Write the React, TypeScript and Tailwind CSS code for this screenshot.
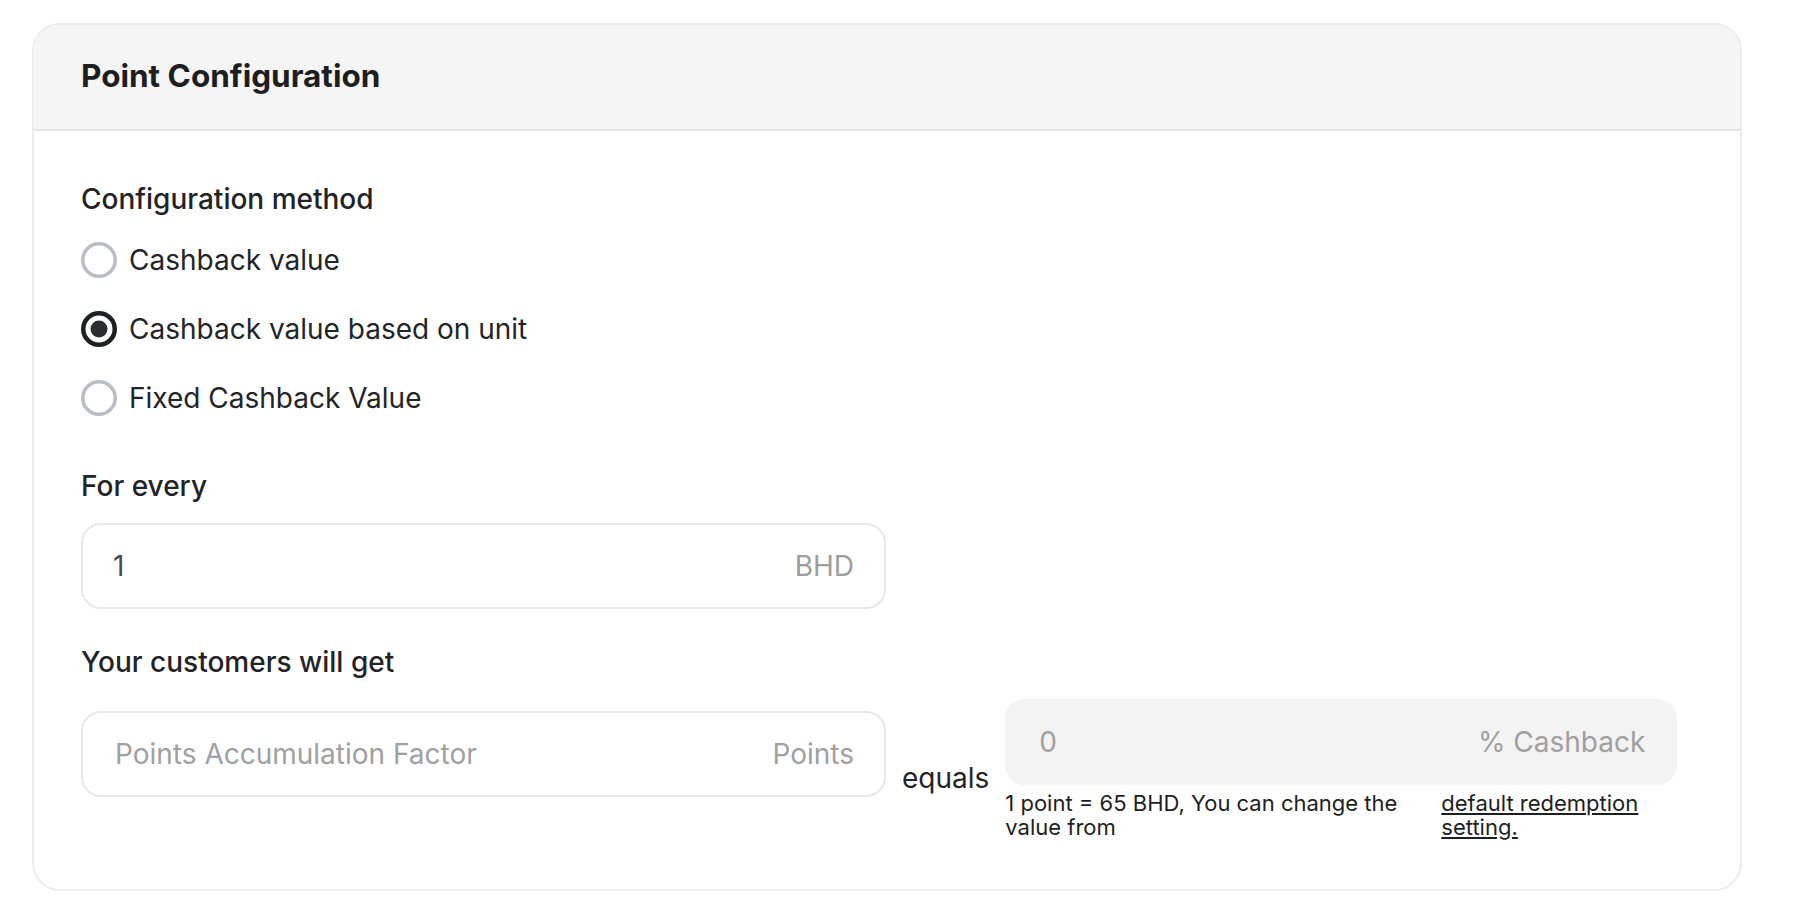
import { useState } from 'react';

type Method = 'cashback' | 'unit' | 'fixed';

const methods: { id: Method; label: string }[] = [
  { id: 'cashback', label: 'Cashback value' },
  { id: 'unit', label: 'Cashback value based on unit' },
  { id: 'fixed', label: 'Fixed Cashback Value' },
];

function Radio({ checked }: { checked: boolean }) {
  return checked ? (
    <svg width="36" height="36" viewBox="0 0 36 36" className="shrink-0">
      <circle cx="18" cy="18" r="15.75" fill="white" stroke="#1f2023" strokeWidth="4.5" />
      <circle cx="18" cy="18" r="8.5" fill="#2b2c2f" />
    </svg>
  ) : (
    <svg width="36" height="36" viewBox="0 0 36 36" className="shrink-0">
      <circle cx="18" cy="18" r="16.25" fill="white" stroke="#b9bec5" strokeWidth="3.5" />
    </svg>
  );
}

export default function App() {
  const [method, setMethod] = useState<Method>('unit');

  return (
    <div className="min-h-screen bg-white pt-[23px] pl-[32px] font-['Inter',sans-serif] text-[#222326]">
      <div className="w-[1710px] h-[868px] rounded-[28px] border-2 border-[#ececec] overflow-hidden">
        {/* header */}
        <div className="h-[106px] bg-[#f5f5f5] border-b-2 border-[#e3e3e3] flex items-center pl-[47px]">
          <h1 className="text-[31.5px] leading-[38px] font-bold text-[#1d1e21] pb-[2px]">
            Point Configuration
          </h1>
        </div>

        <div className="pl-[47px] pt-[52px]">
          <p className="text-[28px] leading-[32px] font-medium">Configuration method</p>

          <div className="mt-[27px] flex flex-col gap-[33px]">
            {methods.map((m) => (
              <label
                key={m.id}
                className="flex items-center gap-[12px] h-[36px] cursor-pointer"
                onClick={() => setMethod(m.id)}
              >
                <Radio checked={method === m.id} />
                <span className="text-[28px] leading-[32px] text-[#232428]">{m.label}</span>
              </label>
            ))}
          </div>

          <p className="mt-[54px] text-[28px] leading-[32px] font-medium">For every</p>
          <div className="mt-[21px] w-[805px] h-[86px] rounded-[20px] border-2 border-[#e7e7e7] flex items-center justify-between px-[30px]">
            <span className="text-[28px] text-[#474a50]">1</span>
            <span className="text-[28px] text-[#9d9d9d]">BHD</span>
          </div>

          <p className="mt-[37px] text-[28px] leading-[32px] font-medium">Your customers will get</p>

          <div className="mt-[21px] flex items-start gap-[16px]">
            <div className="mt-[12px] w-[805px] h-[86px] rounded-[20px] border-2 border-[#e7e7e7] flex items-center justify-between pl-[32px] pr-[30px]">
              <span className="text-[28px] text-[#a0a0a0]">Points Accumulation Factor</span>
              <span className="text-[28px] text-[#a0a0a0]">Points</span>
            </div>
            <span className="mt-[63px] text-[28px] leading-[32px] text-[#222326]">equals</span>
            <div className="w-[672px]">
              <div className="h-[86px] rounded-[20px] bg-[#f3f3f3] flex items-center justify-between pl-[34px] pr-[32px]">
                <span className="text-[28px] text-[#a0a0a0]">0</span>
                <span className="text-[28px] text-[#a0a0a0]">% Cashback</span>
              </div>
              <div className="mt-[6px] flex gap-[16px] text-[22px] leading-[24px] text-[#1d1e21]">
                <span className="w-[420px]">1 point = 65 BHD, You can change the value from</span>
                <a href="#" className="flex-1 underline underline-offset-2">
                  default redemption setting.
                </a>
              </div>
            </div>
          </div>
        </div>
      </div>
    </div>
  );
}
